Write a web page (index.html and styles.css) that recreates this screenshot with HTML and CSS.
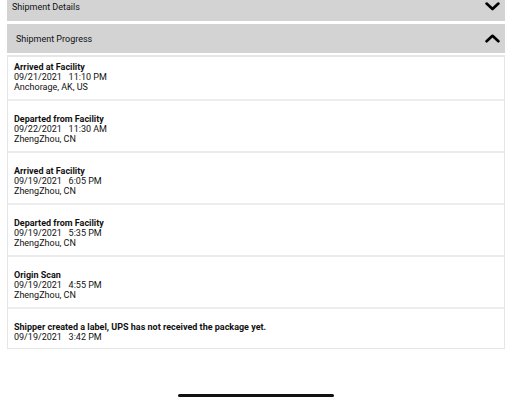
FILE: index.html
```html
<!DOCTYPE html>
<html lang="en">
  <head>
    <meta charset="UTF-8" />
    <meta name="viewport" content="width=device-width, initial-scale=1.0" />
    <title>Shipment</title>
    <link rel="stylesheet" href="styles.css">
  </head>
  <body>
    <div class="page">
      <div class="section-header details">
        <span>Shipment Details</span>
        <svg class="chevron" width="15" height="9" viewBox="0 0 15 9">
          <polyline points="1.6,1.6 7.5,7 13.4,1.6" fill="none" stroke="#000" stroke-width="2.7" stroke-linecap="round" stroke-linejoin="round" />
        </svg>
      </div>

      <div class="section-header progress">
        <span>Shipment Progress</span>
        <svg class="chevron" width="15" height="9" viewBox="0 0 15 9">
          <polyline points="1.6,7.2 7.5,1.8 13.4,7.2" fill="none" stroke="#000" stroke-width="2.7" stroke-linecap="round" stroke-linejoin="round" />
        </svg>
      </div>

      <ul class="events">
        <li class="event first">
          <div class="title">Arrived at Facility</div>
          <div class="when">09/21/2021&nbsp;&nbsp; 11:10 PM</div>
          <div>Anchorage, AK, US</div>
        </li>
        <li class="event">
          <div class="title">Departed from Facility</div>
          <div class="when">09/22/2021&nbsp;&nbsp; 11:30 AM</div>
          <div>ZhengZhou, CN</div>
        </li>
        <li class="event">
          <div class="title">Arrived at Facility</div>
          <div class="when">09/19/2021&nbsp;&nbsp; 6:05 PM</div>
          <div>ZhengZhou, CN</div>
        </li>
        <li class="event">
          <div class="title">Departed from Facility</div>
          <div class="when">09/19/2021&nbsp;&nbsp; 5:35 PM</div>
          <div>ZhengZhou, CN</div>
        </li>
        <li class="event">
          <div class="title">Origin Scan</div>
          <div class="when">09/19/2021&nbsp;&nbsp; 4:55 PM</div>
          <div>ZhengZhou, CN</div>
        </li>
        <li class="event last">
          <div class="title">Shipper created a label, UPS has not received the package yet.</div>
          <div class="when">09/19/2021&nbsp;&nbsp; 3:42 PM</div>
        </li>
      </ul>
    </div>

    <div class="home-indicator"></div>
  </body>
</html>
```

FILE: styles.css
```css
* {
  margin: 0;
  padding: 0;
  box-sizing: border-box;
}

body {
  font-family: Roboto, "Liberation Sans", Arial, sans-serif;
  font-size: 9px;
  color: #111;
  background-color: #fff;
  height: 100vh;
  display: flex;
  flex-direction: column;
  overflow: hidden;
}

.page {
  padding: 0 7px;
}

.section-header {
  display: flex;
  justify-content: space-between;
  background-color: #d3d3d3;
}

.section-header.details {
  height: 21px;
  align-items: flex-start;
  padding: 2px 5px 0 5px;
  margin-bottom: 3px;
}

.section-header.progress {
  height: 29px;
  align-items: center;
  padding: 0 5px 0 9px;
}

.events {
  list-style-type: none;
  margin-top: 2px;
  border: 1px solid #e6e6e6;
  border-top-width: 2px;
}

.event {
  padding: 13px 6px 7px;
  line-height: 10px;
  border-bottom: 2px solid #ececec;
}

.event.first {
  padding-top: 5px;
}

.event.last {
  padding-bottom: 6px;
  border-bottom: none;
}

.event .title {
  font-weight: bold;
}

.home-indicator {
  width: 156px;
  height: 3px;
  border-radius: 2px;
  background-color: #111;
  margin: auto auto 5px;
}
```
